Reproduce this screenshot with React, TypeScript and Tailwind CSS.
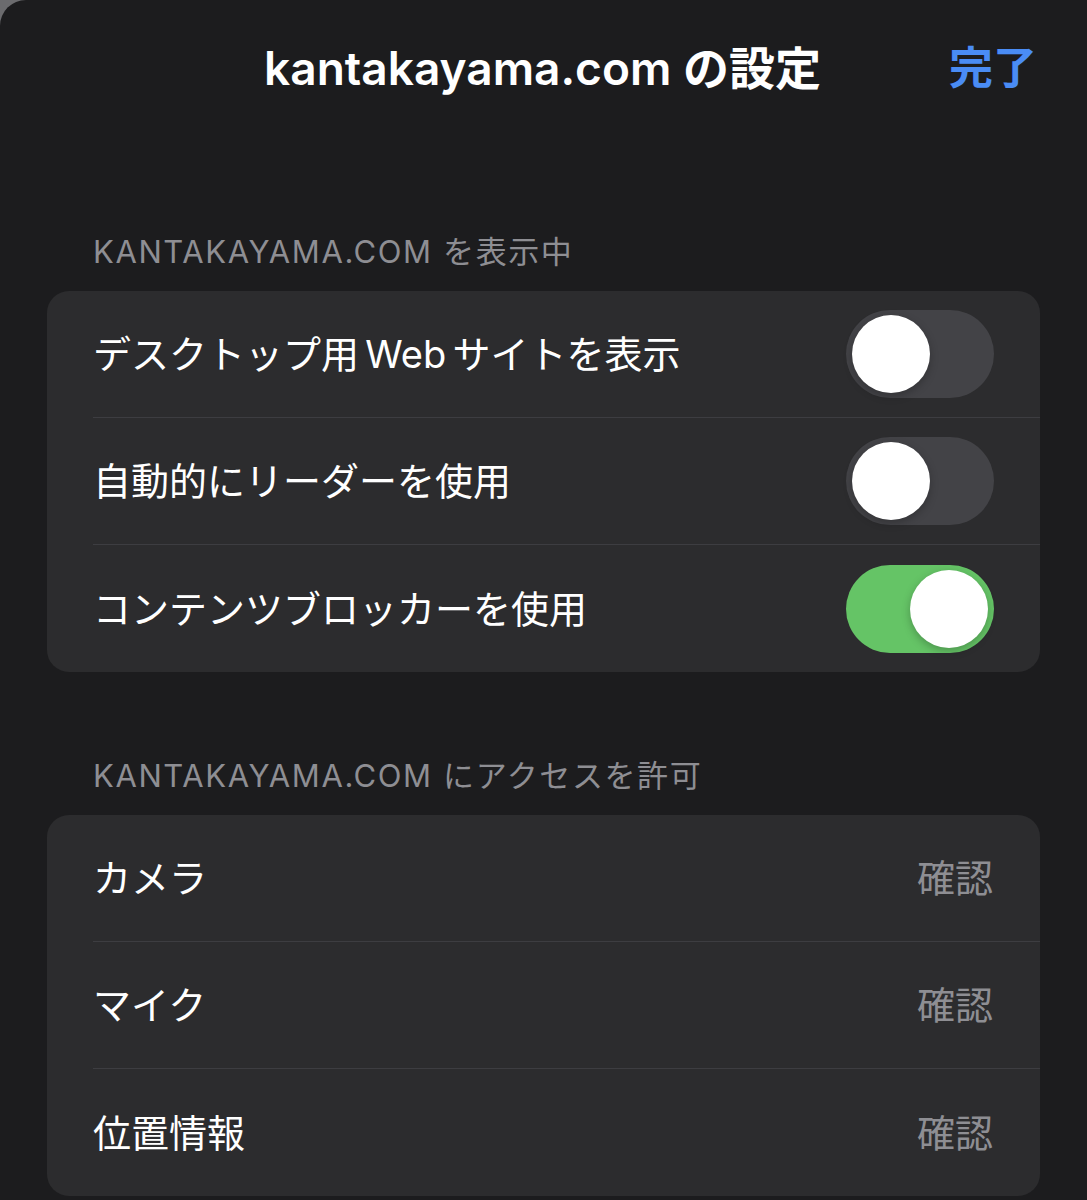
import React from "react";

const FONT = "font-['Inter','Noto_Sans_CJK_JP',sans-serif]";

type ToggleRow = { label: string; on: boolean };
type PermRow = { label: string; value: string };

const displayRows: ToggleRow[] = [
  { label: "デスクトップ用\u2006Web\u2006サイトを表示", on: false },
  { label: "自動的にリーダーを使用", on: false },
  { label: "コンテンツブロッカーを使用", on: true },
];

const permRows: PermRow[] = [
  { label: "カメラ", value: "確認" },
  { label: "マイク", value: "確認" },
  { label: "位置情報", value: "確認" },
];

function Toggle({ on }: { on: boolean }) {
  return (
    <div
      className={
        on
          ? "flex h-[88px] w-[148px] shrink-0 items-center justify-end rounded-full bg-[#65c466] px-[6px]"
          : "flex h-[88px] w-[148px] shrink-0 items-center justify-start rounded-full bg-[#434347] px-[6px]"
      }
    >
      <div className="h-[78px] w-[78px] rounded-full bg-white shadow-[0_3px_8px_rgba(0,0,0,0.25)]" />
    </div>
  );
}

function SectionLabel({ children, top }: { children: React.ReactNode; top: string }) {
  return (
    <div
      className={`${top} px-[93px] pb-[21px] text-[31px] leading-[36px] tracking-[1.6px] text-[#8e8e93]`}
    >
      {children}
    </div>
  );
}

export default function App() {
  return (
    <div className={`${FONT} h-[1200px] w-[1087px] overflow-hidden bg-[#6b6b6e]`}>
      <div className="h-full w-full overflow-hidden rounded-tl-[26px] bg-[#1c1c1e]">
        {/* Header */}
        <div className="relative flex h-[136px] items-center justify-center">
          <h1 className="pr-[2px] text-[46px] font-semibold leading-none text-white">kantakayama.com の設定</h1>
          <button
            type="button"
            className="absolute right-[50px] top-1/2 -translate-y-1/2 text-[44px] font-semibold leading-none text-[#4a8cf5]"
          >
            完了
          </button>
        </div>

        <SectionLabel top="pt-[98px]">KANTAKAYAMA.COM を表示中</SectionLabel>

        <div className="mx-[47px] overflow-hidden rounded-[22px] bg-[#2c2c2e]">
          {displayRows.map((row, i) => (
            <div key={row.label} className="pl-[46px]">
              <div
                className={
                  i < displayRows.length - 1
                    ? "flex h-[127px] items-center justify-between border-b border-[#3d3d41] pr-[46px]"
                    : "flex h-[127px] items-center justify-between pr-[46px]"
                }
              >
                <span className="text-[38px] leading-none text-white">{row.label}</span>
                <Toggle on={row.on} />
              </div>
            </div>
          ))}
        </div>

        <SectionLabel top="pt-[86px]">KANTAKAYAMA.COM にアクセスを許可</SectionLabel>

        <div className="mx-[47px] overflow-hidden rounded-[22px] bg-[#2c2c2e]">
          {permRows.map((row, i) => (
            <div key={row.label} className="pl-[46px]">
              <div
                className={
                  i < permRows.length - 1
                    ? "flex h-[127px] items-center justify-between border-b border-[#3d3d41] pr-[47px]"
                    : "flex h-[127px] items-center justify-between pr-[47px]"
                }
              >
                <span className="text-[38px] leading-none text-white">{row.label}</span>
                <span className="text-[38px] leading-none text-[#8e8e93]">{row.value}</span>
              </div>
            </div>
          ))}
        </div>
      </div>
    </div>
  );
}
